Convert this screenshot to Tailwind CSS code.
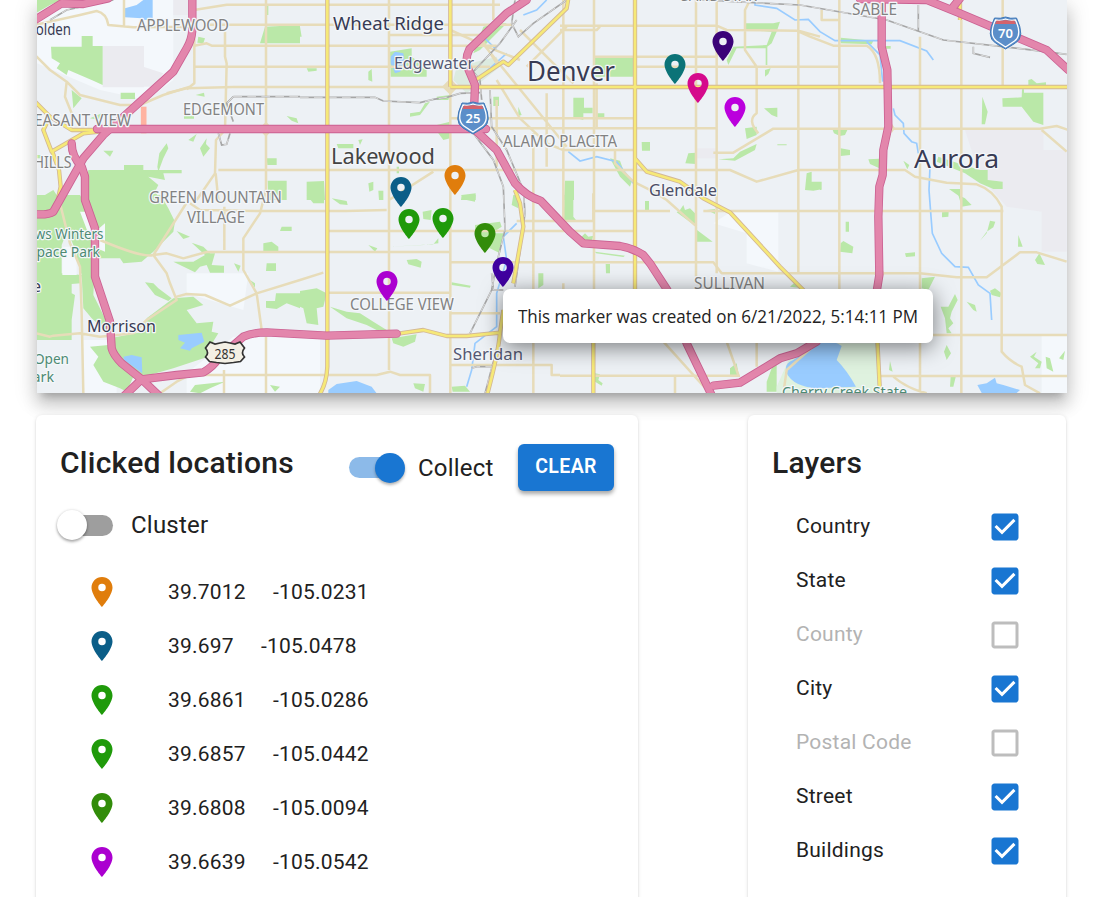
<!DOCTYPE html>
<html lang="en">
<head>
<meta charset="utf-8">
<title>Clicked locations</title>
<script src="https://cdn.jsdelivr.net/npm/@tailwindcss/browser@4"></script>
</head>
<body class="bg-white font-[Roboto,sans-serif] text-[#212121]">
<div class="h-[897px] overflow-hidden px-9">
<main class="relative ml-px h-[393px] w-[1030px] shadow-[0_7.5px_7.5px_-4.5px_rgba(0,0,0,.2),0_12px_15px_1.5px_rgba(0,0,0,.14),0_4.5px_21px_3px_rgba(0,0,0,.12)]">
<svg class="block h-[393px] w-[1030px]" viewBox="111 0 3090 1179">
<defs>
<path id="pin" fill-rule="evenodd" d="M12 2C8.13 2 5 5.13 5 9c0 5.25 7 13 7 13s7-7.75 7-13c0-3.87-3.13-7-7-7zm0 9.5a2.5 2.5 0 1 1 0-5 2.5 2.5 0 0 1 0 5z"/>
<g id="pink">
<path d="M1580 0L1520 40 1408 148Q1394 175 1404 205L1425 255 1420 385 1490 450 1545 550Q1580 590 1622 602L1710 695 1750 730 1860 738Q1900 745 1930 765L1950 790 2002 870 2060 1030 2137 1190"/>
<path d="M291 387H1458"/>
<path d="M577 -5V90Q575 120 560 145L520 215 310 405 250 475 160 635Q145 645 110 643"/>
<path d="M215 430Q215 470 245 500L255 530V600L285 685V830L330 965 335 1045Q340 1065 365 1090L425 1138 480 1190M425 1138L370 1190M425 1138L530 1125 610 1117Q640 1100 655 1075L730 1010Q760 997 800 997L980 1007 1190 1001"/>
<path d="M105 60L185 10 250 12 325 -5"/>
<path d="M2580 -3L2780 0 2880 40 3140 150 3205 210M2860 20L2880 -5"/>
<path d="M2645 -5V140L2662 210 2665 380 2650 450 2648 525 2638 560 2635 650 2638 825 2630 875"/>
<path d="M2450 1025L2390 1060 2340 1075 2220 1148 2140 1157"/>
</g>
<g id="yellow">
<path d="M982 -5V1100Q980 1150 958 1185M1351 -5V260M1351 261H3205M1905 -5V890M1705 -5L1700 25 1525 195 1510 185 1420 245M1905 475L1940 515 2040 545 2110 595 2190 637 2340 800 2415 875"/>
<path d="M1545 570L1560 610 1570 680 1540 850M1195 1001L1270 990 1340 1008 1400 1008 1500 998 1510 930M1500 998Q1495 1060 1460 1190M1780 1020V1180M2632 1020L2640 1180"/>
<path d="M105 305L150 350 215 390H340L250 400 155 455 130 390 140 370M155 450L177 510 182 560 172 605M2880 -5V60"/>
</g>
<g id="rail">
<path d="M900 292H1125L1150 303 1260 308 1300 298 1340 292 1380 280 1440 278M700 290H900M700 290L680 310 700 365M655 400L665 435 680 433 690 400"/>
<path d="M1700 0L1600 70 1555 110 1535 70 1545 0M1550 60L1500 130 1420 215 1440 240 1445 300M1420 400L1480 480 1510 560 1515 690 1490 790 1475 870 1410 1000M1470 270L1475 380 1520 450 1570 570 1575 640 1555 790 1545 860M1500 1010L1455 1180M1475 820L1480 870 1510 870M1415 1105L1430 1100 1475 1100"/>
<path d="M2100 0L2400 15 2660 60 2830 120 3080 148 3200 163M2755 15V95M2920 140V160L2970 172M150 60L200 30 340 0"/>
</g>
</defs>
<rect x="111" width="3090" height="1179" fill="#edf1f5"/>

<!-- land tint -->
<g fill="#f4f8fc">
<path d="M111 60L250 0H520V240L440 300 300 270 111 190ZM2140 670L2190 637H2335V815L2240 790V700ZM3125 1005H3205V1180H3125ZM560 820H745L730 930 560 880ZM250 1020H350V1179H250ZM560 1120L700 1010H960V1179H560ZM900 1020H950V1090H900Z"/>
</g>
<g fill="#ebebf0"><path d="M308 138H432V262H308ZM430 200L490 220 460 260H430ZM2895 390L3130 385V450H3200V755H3125V635L3020 620 2940 530ZM2090 445H2150V475H2090ZM520 0H580V45H520Z"/></g>
<g fill="#dcebe0"><path d="M1370 200L1490 170 1500 200 1400 280 1360 240Z"/></g>

<!-- parks -->
<g fill="#bae8a8">
<g transform="translate(90 0)">
<path d="M20 0H95L60 15 20 38ZM63 140H155V108H188V138H218V255L190 242 115 210 110 225 80 205 90 190 65 175ZM125 270L155 295 130 325ZM272 278H315V297H272ZM705 80L810 75V130L690 130ZM505 110L525 115 520 130 502 128ZM497 285L522 278 524 290ZM710 15H715V45H708ZM175 510H282V495H340V510H455V520H400L405 540 355 530 385 555 375 575 392 600H160ZM20 600L70 570 90 600ZM20 465H38V475H20ZM220 452H250L240 470ZM462 345H492V356H462ZM475 420L500 402 490 425ZM510 445L530 415 528 432 540 445 520 470ZM382 500L388 460 410 430 415 445 400 475 385 515ZM710 475H740V495H712ZM713 542H770V600H715ZM180 355L215 340 210 360ZM770 348L800 355 805 370 785 362Z"/></g>
<g transform="translate(90 585)">
<path d="M20 0H90L115 100 95 150V235L155 240 152 265 125 267V295L135 300 125 375V435H20ZM90 0H150L200 90 190 300 240 400 240 420 185 370 160 340 155 240 130 150 100 80ZM158 0H392L415 40 435 80 430 110 370 170 335 200 280 205 270 190H200L180 100ZM180 455L235 450 310 545 290 590 270 580 220 560 190 510 205 485ZM430 310L490 305 520 330 470 345 500 385 550 380 545 410 565 415 540 455 550 480 430 520 340 545 240 480 240 430 340 410 350 370ZM345 262L370 265 385 280 425 310 415 318 375 300ZM485 143L520 155 540 175H555L545 210 582 212V233H540L530 210 510 215 495 232 430 200 490 200 525 180ZM440 108L480 125 460 132ZM755 95L785 95V108H750ZM700 145L725 140 745 155V168H700ZM710 205H738V228H708ZM738 295H810V340L770 325 740 342 708 338V318H735ZM612 205L632 212 625 230ZM480 590L495 570 585 560 540 580 510 595ZM720 570L750 575 735 590ZM660 255L675 265V278Z"/></g>
<g transform="translate(900 0)"><path d="M270 155L335 145V170L380 205V230H272ZM20 205H50V212L25 215ZM205 215L215 207 217 245 205 240ZM330 340L360 335 375 310 390 305 360 345 330 350ZM410 290L450 285 445 300 410 300ZM110 432H160V445H115ZM175 420L188 418 180 435ZM410 375L450 365V415L430 420 415 400ZM580 290H597V318H580ZM20 545L72 543 75 600H20ZM205 550L220 545V570L208 575ZM235 572H250V600H237ZM485 585L527 580V600H483ZM550 80L590 70 620 70 540 150 520 160ZM0 80L5 110H0ZM655 320L665 345 655 348ZM290 500H297V520H290Z"/></g>
<g transform="translate(900 585)"><path d="M95 10L140 18 143 30 120 28ZM20 0H72V25H40ZM483 0H527L525 20 500 15ZM368 50L395 45 392 75 370 72ZM320 195L350 192 365 200 362 218 325 208ZM205 150L232 160 225 170ZM0 288L50 280 80 295 70 335 50 340 55 390 20 385 10 340 0 335ZM90 335L140 350 180 355 220 380 260 405 240 410 200 390 140 370ZM275 430L350 418 345 440 310 455 280 445ZM525 90L600 80 605 95 575 115 610 115 600 175 550 150 525 110ZM455 262L512 272 510 278 455 270ZM340 565L375 567 370 590 345 580ZM455 575L495 572 510 590H458ZM715 235H730V270L715 280ZM370 150L415 145V130L400 148 270 155ZM640 0H655V40L635 30ZM795 0H810V75H790Z"/></g>
<g transform="translate(1680 0)"><path d="M102 170H220V230H104ZM555 70H640L660 65 650 95 635 130 622 140V195H617V145H530L505 195 500 180 520 140 620 135 635 95 555 90ZM615 210L632 205 625 222 615 230ZM40 293H72V323H98V340H70V360L40 352ZM108 340H133V353H108ZM245 426H270V452H246ZM376 490L385 460 407 458V492ZM612 325L652 323V352L635 345ZM555 385L590 380V405L560 417ZM475 478L520 475 540 455 590 432 585 450 525 482ZM735 570L740 520 755 515 755 545 785 545V568L760 572ZM15 542H42V600H12ZM490 355L505 352ZM652 433H680V436H652ZM150 475L180 482 190 510 215 545 210 560 180 530Z"/></g>
<g transform="translate(1680 585)"><path d="M12 0H40V65L48 75 15 78ZM255 18H267V45H255ZM360 45L370 30 375 45 390 40 405 55V92L350 52ZM408 103L458 140H410ZM440 45L465 42V57ZM60 130L75 115 85 125 100 122 95 140H60ZM137 207H150V235H138ZM105 170L195 182 190 186 108 175ZM690 275L705 262 730 280ZM620 560L650 480V590H620ZM510 520L530 505 537 545H510ZM105 535L120 538 115 555 128 565 125 572 105 560Z"/></g>
<g transform="translate(2460 0)"><path d="M62 113L160 122 155 133 62 130ZM198 138H212V146H198ZM547 295L605 292 606 268H612V278H670V375L640 365 605 320H548ZM487 290L503 335 495 373H485ZM625 240L635 237 650 250 678 247V258H625ZM38 390H82L75 405 60 408 42 400ZM62 445L90 450V465L62 468ZM145 478L178 476V505L150 492ZM250 482L268 495 262 508ZM355 470L440 498 480 510H503V540L548 545V567H520L480 550 435 520 350 485ZM387 567H420V590ZM0 560L5 570H0Z"/></g>
<g transform="translate(2460 585)"><path d="M415 0L435 10 455 30 425 35ZM366 52L386 50 385 65 366 67ZM77 80H87V110H77ZM62 145L70 138 100 155 97 175 60 170ZM255 175L285 172V184L258 186ZM480 137L500 115 510 77 526 80 520 97 500 110ZM595 120L608 155H594ZM645 195L658 175 675 210 652 207ZM510 287L525 280 545 295 540 307 515 300ZM305 250L345 245 325 285 305 280ZM362 335L385 335 405 297 413 315 395 350 390 370 400 385 385 400 395 415 380 415 375 370ZM440 320L465 330 470 350 460 345ZM372 470L380 450 393 475 380 495ZM207 525L210 498 218 530ZM392 545L408 542 400 575H390ZM630 485L650 470 642 485 665 500 660 520 645 520 655 505ZM677 485L690 490 700 530 680 520ZM717 490L735 467 730 495Z"/></g>
</g>
<path fill="#f4f8fc" d="M240 635H270L280 700 315 670V755L280 740ZM187 740H230V825H187Z"/>
<path fill="#dff2df" d="M2330 1160L2370 1070 2440 1030H2640V1180H2330Z"/>

<!-- water -->
<g fill="#9cf">
<path d="M375 25L410 15 430 0H458V65L425 55 375 52ZM1172 170L1185 155 1210 160 1215 195 1200 215 1185 220 1172 190ZM535 1005L605 998 613 1025 575 1045 570 1052 540 1045 555 1028 535 1020ZM370 1070L395 1065 425 1072 427 1120 372 1080ZM985 1170L1010 1152 1070 1143 1115 1160 1130 1180H985ZM2360 1120Q2350 1090 2380 1080L2450 1030Q2490 1015 2525 1038L2510 1080Q2540 1110 2568 1160L2450 1165Q2380 1160 2360 1120ZM2932 1155L2960 1150 2985 1133 2990 1150 3010 1155 3060 1170 3050 1179H2945Z"/>
</g>
<g fill="none" stroke="#9cf" stroke-width="5">
<path d="M435 0V60M2265 0L2265 15 2330 25 2385 60 2425 58 2460 95 2505 122H2700L2780 153 2800 180M2600 125L2640 165 2648 245M2680 325L2685 345 2710 370 2712 400 2735 425 2750 430 2755 460M2790 500L2787 570 2793 650 2797 700 2825 760 2865 800 2905 802 2935 855 2970 880 2975 960M1705 455L1740 483 1790 470 1850 485 1900 550M1520 160L1430 240M1640 0L1610 30 1570 45M1490 150L1440 100M1550 670L1510 710 1520 780 1490 880 1490 980 1425 1030 1415 1110 1400 1160"/>
</g>

<!-- local streets -->
<g fill="none" stroke="#e7dcb9" stroke-width="7.500" stroke-linejoin="round">
<path d="M582 30L680 14H1500M620 74H1540M583 137L620 130 635 137H1490M584 200H1470M500 280L560 265 700 261H1351M655 510H2190L2270 545 2395 510H2715L2745 530 2840 548 2930 553Q2980 570 3005 620V1055Q3030 1085 3065 1100L3075 1155 3120 1180M1170 105H1440M1350 355H1910M1440 385H2150M2140 458H2200L2320 386H3120L3170 378 3205 390M3125 390L3200 455"/>
<path d="M105 75L240 45 290 33Q320 40 325 75L400 82 590 80M372 0V80M105 165L150 210 200 245 240 285 360 315H420L490 285 570 260M200 245L195 290 215 340V390M583 60V250L560 268M675 95V170L680 190 675 390 648 420 645 520 590 600M647 520L655 600M798 -5V570L780 640 730 715V810L770 880 785 990M798 1010V1180M1167 -5V1110M1351 260V1180M673 620V750M1167 600L1300 515M565 600L460 765Q430 775 300 720M460 765L500 820 510 850 530 900 440 960 400 1000 300 1010 240 1000 160 1007 150 1010 110 1000M180 610L210 730 240 800 245 940 250 1180M530 890L560 882 615 885 690 917 770 880 900 840 970 818M460 765L500 760 550 775 620 756H900M570 610L600 630 780 633H1040L1160 630M985 693H1351L1900 693M900 756H1352M1351 787H2140L2165 820H2760L2870 832H2960L3060 757H3110L3200 785M985 878H1350M1350 940H1500M1351 1095H1655V1125H1680M985 1125H1130L1170 1115 1200 1125H1290V1180M540 1125H985M672 1110V1180M1680 1127H2220M2640 1128H3205M2790 1005H3205M1550 663H1780V580M1785 633H2010M2110 633H3010"/>
<path d="M1480 -5V60M1490 300V500M1690 -5V690M1600 400V1180M1640 280V500M1690 850V900M1782 -5V1000M1790 250V385M2088 -5V830M2150 -5V820M2395 -5V820M2518 -5V870M2760 110V1180M2884 60V1180M3008 0V260M1351 90L1460 140 1560 180M1440 120L1700 440M1560 90L1720 250M1490 240L1560 355 1640 430 1690 450H1905M1440 110L1490 190M1580 200L1700 80M1680 77H2150L2180 90 2390 92 2430 110 2500 137H2600Q2640 160 2640 250M1680 90H1790L1800 80M1780 170H2150M1905 200H2515M2250 0L2235 30V150L2270 200V340Q2240 360 2275 400M2395 92L2460 110M2465 30V60H2520M1845 450V490L1900 545 1960 575 2000 600 2090 680M1990 1025L2130 1180M2180 1025L2215 1125M2270 1025V1100M2025 1127V1180M2350 1180L2360 1110 2450 1030M2680 1130Q2720 1165 2780 1180M480 1180L530 1145 560 1130"/>
</g>
<path fill="#e7dcb9" d="M798 365L820 387 798 410 775 387ZM1351 235L1375 260 1351 285 1326 260ZM2675 370L2685 385 2675 400ZM2620 820L2638 800 2655 820 2638 840Z"/>

<g fill="none" stroke="#a6a6a6" stroke-width="5"><use href="#rail"/></g>
<g fill="none" stroke="#e6e6e6" stroke-width="2.5" stroke-dasharray="26 16"><use href="#rail"/></g>
<g fill="none" stroke-linejoin="round"><use href="#yellow" stroke="#d3b795" stroke-width="13"/><use href="#yellow" stroke="#f6e978" stroke-width="8"/></g>
<path fill="none" stroke="#ffb3a1" stroke-width="17" d="M431 320V400"/>
<g fill="none" stroke-linejoin="round" stroke-linecap="round"><use href="#pink" stroke="#cb6192" stroke-width="25"/><use href="#pink" stroke="#e386ac" stroke-width="20"/></g>

<!-- highway shields -->
<g transform="scale(3)">
<g id="shield"><path d="M462 103Q468 104 473 102Q478 104 484 103Q493 122 483 128L473 134 463 128Q453 122 462 103Z" fill="#5b8ec9" stroke="#3f78b8" stroke-width="1"/><path d="M463 105Q468 106 473 104Q478 106 483 105Q490 120 482 126L473 132 464 126Q456 120 463 105Z" fill="#5b8ec9" stroke="#fff" stroke-width="1.3"/><path d="M464 105.5Q469 106 473 105Q477 106 482 105.5L483.500 109H462.500Z" fill="#d4636c"/></g>
<use href="#shield" x="532.500" y="-85"/>
<path d="M210 342l5 2 5-1 5-1 5 1 5 1 5-2 4.500 6q-4 5 0 9l-4 4.500-7 1-8.500 1-8.500-1-7-1-4-4.500q4-4 0-9Z" fill="#f3f0e5" stroke="#333" stroke-width="1.700"/>

<!-- place labels -->
<g font-family="'Noto Sans',sans-serif" stroke="#f4f7fa" stroke-width="2.500" paint-order="stroke" stroke-linejoin="round">
<g fill="#828282" font-size="15.500">
<text x="137" y="31" textLength="92" lengthAdjust="spacingAndGlyphs">APPLEWOOD</text>
<text x="183" y="115" textLength="81" lengthAdjust="spacingAndGlyphs">EDGEMONT</text>
<text x="17" y="126" textLength="114" lengthAdjust="spacingAndGlyphs">PLEASANT VIEW</text>
<text x="33.500" y="168" textLength="38" lengthAdjust="spacingAndGlyphs">HILLS</text>
<text x="503" y="147" textLength="114" lengthAdjust="spacingAndGlyphs">ALAMO PLACITA</text>
<text x="149" y="203" textLength="133" lengthAdjust="spacingAndGlyphs">GREEN MOUNTAIN</text>
<text x="187" y="223" textLength="58" lengthAdjust="spacingAndGlyphs">VILLAGE</text>
<text x="350" y="310" textLength="104" lengthAdjust="spacingAndGlyphs">COLLEGE VIEW</text>
<text x="694" y="289" textLength="71" lengthAdjust="spacingAndGlyphs">SULLIVAN</text>
<text x="852" y="15" textLength="45" lengthAdjust="spacingAndGlyphs">SABLE</text>
<text x="681" y="1" textLength="76" lengthAdjust="spacingAndGlyphs">SAND STAR</text>
</g>
<g fill="#383b54">
<text x="26" y="35" font-size="16.500" textLength="45" lengthAdjust="spacingAndGlyphs">Golden</text>
<text x="333" y="30" font-size="18.500" textLength="111" lengthAdjust="spacingAndGlyphs">Wheat Ridge</text>
<text x="394" y="69" font-size="16.500" fill="#555973" textLength="80" lengthAdjust="spacingAndGlyphs">Edgewater</text>
<text x="527" y="80.500" font-size="27" textLength="88" lengthAdjust="spacingAndGlyphs">Denver</text>
<text x="331" y="164" font-size="22" fill="#444" textLength="104" lengthAdjust="spacingAndGlyphs">Lakewood</text>
<text x="649" y="196" font-size="17" fill="#4b4e66" textLength="68" lengthAdjust="spacingAndGlyphs">Glendale</text>
<text x="914" y="167.500" font-size="26" textLength="85" lengthAdjust="spacingAndGlyphs">Aurora</text>
<text x="87" y="332" font-size="16.500" textLength="69" lengthAdjust="spacingAndGlyphs">Morrison</text>
<text x="453" y="360" font-size="16.500" fill="#555973" textLength="70" lengthAdjust="spacingAndGlyphs">Sheridan</text>
<text x="41" y="292" font-size="16" text-anchor="end">e</text>
</g>
<g fill="#4d8a73" font-size="14.500">
<text x="15.500" y="239" textLength="88" lengthAdjust="spacingAndGlyphs">Mews Winters</text>
<text x="29" y="257" textLength="71" lengthAdjust="spacingAndGlyphs">Space Park</text>
<text x="34" y="364" textLength="35" lengthAdjust="spacingAndGlyphs">Open</text>
<text x="24" y="382" textLength="30" lengthAdjust="spacingAndGlyphs">Park</text>
<text x="782" y="397" textLength="125" lengthAdjust="spacingAndGlyphs">Cherry Creek State</text>
</g>
</g>
<g font-family="'Noto Sans',sans-serif" text-anchor="middle"><g fill="#fff" font-weight="600" font-size="13"><text x="473" y="123">25</text><text x="1005.500" y="38">70</text></g><text x="225" y="359" font-size="13.500" fill="#333" textLength="21" lengthAdjust="spacingAndGlyphs">285</text></g>

<!-- markers -->
<use href="#pin" fill="#3b0378" transform="translate(705 28) scale(1.5)"/>
<use href="#pin" fill="#0b7377" transform="translate(657 51) scale(1.5)"/>
<use href="#pin" fill="#d50a8c" transform="translate(680 70) scale(1.5)"/>
<use href="#pin" fill="#bb00dd" transform="translate(717 94) scale(1.5)"/>
<use href="#pin" fill="#e07d0c" transform="translate(437 162) scale(1.5)"/>
<use href="#pin" fill="#0b5e88" transform="translate(383 174) scale(1.5)"/>
<use href="#pin" fill="#1f9a0a" transform="translate(391 206) scale(1.5)"/>
<use href="#pin" fill="#1f9a0a" transform="translate(425 205) scale(1.5)"/>
<use href="#pin" fill="#328c0a" transform="translate(467 220) scale(1.5)"/>
<use href="#pin" fill="#4000a0" transform="translate(485 254) scale(1.5)"/>
<use href="#pin" fill="#ab00d0" transform="translate(369 268) scale(1.5)"/>
</g>
</svg>
<div class="absolute left-[466px] top-[289px] flex h-[54px] w-[430px] items-center whitespace-nowrap rounded-[7px] bg-white px-[15px] shadow-[0_4px_22px_rgba(0,0,0,.5)]">
<svg class="h-[54px] w-[400px]"><text x="0" y="34" font-family="'Open Sans',sans-serif" font-size="18" fill="#222" textLength="400" lengthAdjust="spacingAndGlyphs">This marker was created on 6/21/2022, 5:14:11 PM</text></svg>
</div>
</main>

<div class="relative mt-[22px] flex justify-between pr-px">
<section class="h-[520px] w-[602px] rounded-md bg-white px-6 pt-[29px] shadow-[0_3px_1.5px_-1.5px_rgba(0,0,0,.2),0_1.5px_1.5px_rgba(0,0,0,.1),0_1.5px_4.5px_rgba(0,0,0,.12)]">
<header class="flex h-[47px] items-start">
<h2 class="w-[289px] pt-px text-[30px] font-medium leading-9 tracking-[.25px]">Clicked locations</h2>
<div class="flex h-[47px] items-center">
<span class="relative h-[21px] w-[51px] rounded-full bg-[#8cbae9]"><span class="absolute -top-[4.5px] left-[26px] size-[30px] rounded-full bg-[#1976d2] shadow-[0_2px_3px_rgba(0,0,0,.3)]"></span></span>
<span class="ml-[18px] w-[100px] text-2xl tracking-[.22px]">Collect</span>
</div>
<button class="h-[47px] w-24 rounded-md bg-[#1976d2] pb-px text-[19.500px] font-semibold tracking-[.4px] text-white shadow-[0_3px_4px_rgba(0,0,0,.35)]">CLEAR</button>
</header>
<div class="mt-[15px] flex h-[38px] items-center">
<span class="relative ml-0.5 h-[21px] w-[51px] rounded-full bg-[#9e9e9e]"><span class="absolute -left-[5px] -top-[4.5px] size-[30px] rounded-full bg-white shadow-[0_2px_3px_rgba(0,0,0,.3),0_0_3px_rgba(0,0,0,.15)]"></span></span>
<span class="ml-[18px] text-2xl tracking-[.22px]">Cluster</span>
</div>
<ul class="mt-[21px] pl-6 text-[21px] tracking-[.22px]">
<li class="flex h-[54px] items-center"><svg class="size-9" viewBox="0 0 24 24" fill="#e07d0c"><use href="#pin"/></svg><span class="ml-12 pt-0.5">39.7012</span><span class="ml-[27px] pt-0.5">-105.0231</span></li>
<li class="flex h-[54px] items-center"><svg class="size-9" viewBox="0 0 24 24" fill="#0b5e88"><use href="#pin"/></svg><span class="ml-12 pt-0.5">39.697</span><span class="ml-[27px] pt-0.5">-105.0478</span></li>
<li class="flex h-[54px] items-center"><svg class="size-9" viewBox="0 0 24 24" fill="#1f9a0a"><use href="#pin"/></svg><span class="ml-12 pt-0.5">39.6861</span><span class="ml-[27px] pt-0.5">-105.0286</span></li>
<li class="flex h-[54px] items-center"><svg class="size-9" viewBox="0 0 24 24" fill="#1f9a0a"><use href="#pin"/></svg><span class="ml-12 pt-0.5">39.6857</span><span class="ml-[27px] pt-0.5">-105.0442</span></li>
<li class="flex h-[54px] items-center"><svg class="size-9" viewBox="0 0 24 24" fill="#328c0a"><use href="#pin"/></svg><span class="ml-12 pt-0.5">39.6808</span><span class="ml-[27px] pt-0.5">-105.0094</span></li>
<li class="flex h-[54px] items-center"><svg class="size-9" viewBox="0 0 24 24" fill="#ab00d0"><use href="#pin"/></svg><span class="ml-12 pt-0.5">39.6639</span><span class="ml-[27px] pt-0.5">-105.0542</span></li>
</ul>
</section>

<section class="h-[520px] w-[318px] rounded-md bg-white px-6 pt-[29px] shadow-[0_3px_1.5px_-1.5px_rgba(0,0,0,.2),0_1.5px_1.5px_rgba(0,0,0,.1),0_1.5px_4.5px_rgba(0,0,0,.12)]">
<svg class="hidden"><defs>
<path id="on" fill="#1976d2" d="M19 3H5c-1.110 0-2 .9-2 2v14c0 1.100.89 2 2 2h14c1.110 0 2-.9 2-2V5c0-1.100-.89-2-2-2zm-9 14l-5-5 1.410-1.410L10 14.170l7.590-7.590L19 8l-9 9z"/>
<path id="off" fill="#bdbdbd" d="M19 5v14H5V5h14m0-2H5c-1.100 0-2 .9-2 2v14c0 1.100.9 2 2 2h14c1.100 0 2-.9 2-2V5c0-1.100-.9-2-2-2z"/>
</defs></svg>
<h2 class="pt-px text-[30px] font-medium leading-9 tracking-[.22px]">Layers</h2>
<ul class="mt-[19px] px-6 text-[21px] tracking-[.22px]">
<li class="-mr-[5px] flex h-[54px] items-center justify-between"><span>Country</span><svg class="size-9" viewBox="0 0 24 24"><use href="#on"/></svg></li>
<li class="-mr-[5px] flex h-[54px] items-center justify-between"><span>State</span><svg class="size-9" viewBox="0 0 24 24"><use href="#on"/></svg></li>
<li class="-mr-[5px] flex h-[54px] items-center justify-between text-[#b3b3b3]"><span>County</span><svg class="size-9" viewBox="0 0 24 24"><use href="#off"/></svg></li>
<li class="-mr-[5px] flex h-[54px] items-center justify-between"><span>City</span><svg class="size-9" viewBox="0 0 24 24"><use href="#on"/></svg></li>
<li class="-mr-[5px] flex h-[54px] items-center justify-between text-[#b3b3b3]"><span>Postal Code</span><svg class="size-9" viewBox="0 0 24 24"><use href="#off"/></svg></li>
<li class="-mr-[5px] flex h-[54px] items-center justify-between"><span>Street</span><svg class="size-9" viewBox="0 0 24 24"><use href="#on"/></svg></li>
<li class="-mr-[5px] flex h-[54px] items-center justify-between"><span>Buildings</span><svg class="size-9" viewBox="0 0 24 24"><use href="#on"/></svg></li>
</ul>
</section>
</div>
</div>
</body>
</html>
